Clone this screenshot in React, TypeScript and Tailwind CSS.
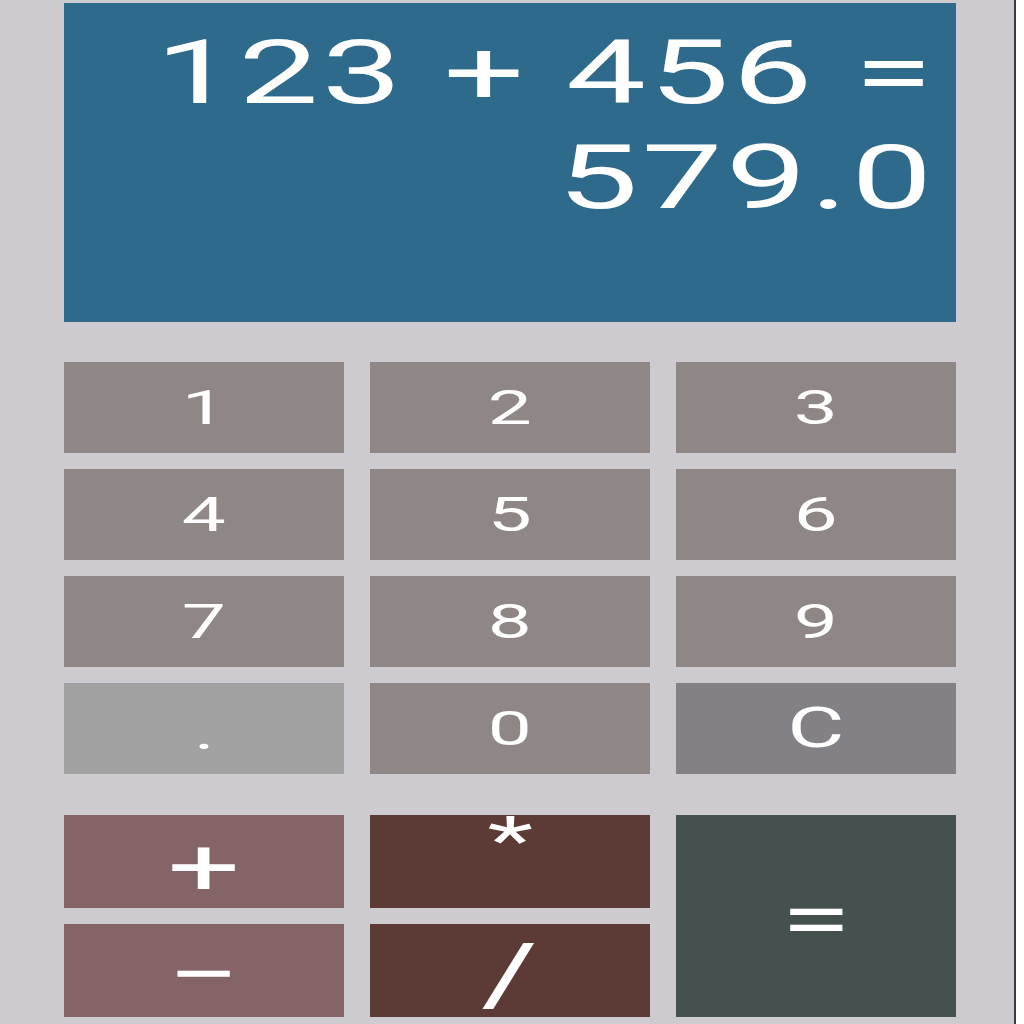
import React from 'react'

const digits = [
  { label: '1', bg: 'bg-[#8e8785]', size: 'text-[49px]' },
  { label: '2', bg: 'bg-[#8e8785]', size: 'text-[49px]' },
  { label: '3', bg: 'bg-[#8e8785]', size: 'text-[49px]' },
  { label: '4', bg: 'bg-[#8e8785]', size: 'text-[49px]' },
  { label: '5', bg: 'bg-[#8e8785]', size: 'text-[49px]' },
  { label: '6', bg: 'bg-[#8e8785]', size: 'text-[49px]' },
  { label: '7', bg: 'bg-[#8e8785]', size: 'text-[49px]' },
  { label: '8', bg: 'bg-[#8e8785]', size: 'text-[49px]' },
  { label: '9', bg: 'bg-[#8e8785]', size: 'text-[49px]' },
  { label: '.', bg: 'bg-[#a1a1a1]', size: 'text-[49px]' },
  { label: '0', bg: 'bg-[#8e8785]', size: 'text-[49px]' },
  { label: 'C', bg: 'bg-[#838186]', size: 'text-[55px]' },
]

function Label({ text, className = '' }: { text: string; className?: string }) {
  return <span className={`inline-block scale-x-[1.6] leading-none ${className}`}>{text}</span>
}

export default function App() {
  return (
    <div className="w-[1024px] h-[1024px] flex bg-white overflow-hidden" style={{ fontFamily: 'Roboto, "Liberation Sans", Arial, sans-serif' }}>
      <main className="w-[1016px] h-full bg-[#cdcbcf] border-r-2 border-[#3a3a3c] pl-[64px] pt-[3px] font-normal">
        <div className="w-[892px] flex flex-col">
          {/* display */}
          <div className="h-[319px] bg-[#2d6a8c] text-white flex flex-col items-end pr-[20px] pt-[17px] text-[89px] leading-[105px]">
            <span className="inline-block scale-x-[1.6] origin-right whitespace-pre tracking-[2px]">123 + 456 =</span>
            <span className="inline-block scale-x-[1.62] origin-right tracking-[2px]">579.0</span>
          </div>

          {/* numbers */}
          <div className="grid grid-cols-3 gap-x-[26px] gap-y-[16px] mt-[40px] auto-rows-[91px]">
            {digits.map((d) => (
              <button key={d.label} className={`${d.bg} text-white ${d.size} flex items-center justify-center`}>
                <Label text={d.label} className={d.label === '.' ? 'translate-y-[4px]' : ''} />
              </button>
            ))}
          </div>

          {/* operators */}
          <div className="grid grid-cols-3 grid-rows-[93px_93px] gap-x-[26px] gap-y-[16px] mt-[41px]">
            <button className="bg-[#846466] text-white text-[80px] flex items-center justify-center">
              <Label text="+" className="translate-y-[6px]" />
            </button>
            <button className="bg-[#5c3b37] text-white text-[66px] flex items-center justify-center">
              <Label text="*" className="-translate-y-[20px]" />
            </button>
            <button className="row-span-2 bg-[#45514f] text-white text-[80px] flex items-center justify-center">
              <Label text="=" className="translate-y-[4px]" />
            </button>
            <button className="bg-[#846466] text-white text-[80px] flex items-center justify-center">
              <Label text="−" className="translate-y-[4px]" />
            </button>
            <button className="bg-[#5c3b37] text-white text-[86px] flex items-center justify-center">
              <Label text="/" className="translate-y-[4px]" />
            </button>
          </div>
        </div>
      </main>
    </div>
  )
}
